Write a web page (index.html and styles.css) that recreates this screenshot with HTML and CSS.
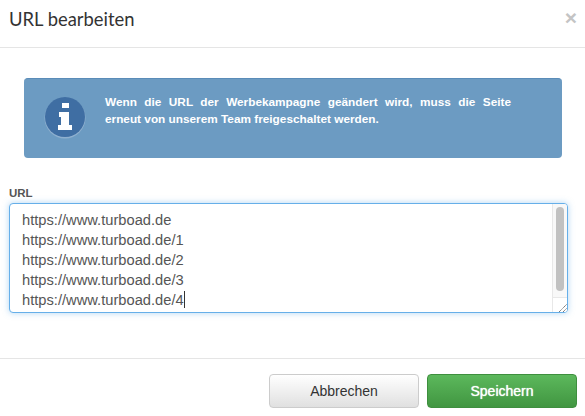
FILE: index.html
```html
<!DOCTYPE html>
<html lang="de">
<head>
<meta charset="utf-8">
<title>URL bearbeiten</title>
<link rel="stylesheet" href="styles.css">
</head>
<body>
<div class="modal">
  <header class="modal-header">
    <h4 class="modal-title">URL bearbeiten</h4>
    <span class="close">×</span>
  </header>
  <main class="modal-body">
    <div class="alert">
      <svg class="alert-icon" width="44" height="44" viewBox="0 0 44 44" aria-hidden="true">
        <circle cx="22" cy="23" r="20.5" fill="#8fb0cf"/>
        <circle cx="22" cy="22" r="20" fill="#3f6ea3"/>
        <path fill="#fff" d="M19 8h7v5h-7zM16 17h10v13h3v5H15v-5h3v-8h-2z"/>
      </svg>
      <p class="alert-text">Wenn die URL der Werbekampagne geändert wird, muss die Seite erneut von unserem Team freigeschaltet werden.</p>
    </div>
    <label class="field-label">URL</label>
    <div class="textarea">
      <div class="textarea-text">
        <div>https://www.turboad.de</div>
        <div>https://www.turboad.de/1</div>
        <div>https://www.turboad.de/2</div>
        <div>https://www.turboad.de/3</div>
        <div>https://www.turboad.de/4<span class="caret"></span></div>
      </div>
      <div class="scrollbar">
        <div class="track"><div class="thumb"></div></div>
        <div class="resizer">
          <svg width="15" height="15" viewBox="0 0 15 15" aria-hidden="true">
            <path d="M6 14 14 6M10 14 14 10" stroke="#666" stroke-width="1" fill="none" stroke-dasharray="1.2 .6"/>
          </svg>
        </div>
      </div>
    </div>
  </main>
  <footer class="modal-footer">
    <button class="btn btn-default">Abbrechen</button>
    <button class="btn btn-success">Speichern</button>
  </footer>
</div>
</body>
</html>
```
FILE: styles.css
```css
* { box-sizing: border-box; }
html, body { margin: 0; padding: 0; background: #fff; }
body { width: 585px; height: 416px; overflow: hidden; font-family: "Liberation Sans", Arial, sans-serif; color: #333; }
.modal { display: flex; flex-direction: column; height: 416px; }
.modal-header {
  height: 48px; border-bottom: 1px solid #e5e5e5; padding: 0 8px 0 9px;
  display: flex; justify-content: space-between; align-items: flex-start;
}
.modal-title { margin: 7px 0 0; font: 400 18.4px/24px "Lato", sans-serif; color: #333; }
.close { font: 700 21px/21px "Liberation Sans", sans-serif; color: #c4c4c4; margin: 7px 0 0 0; }
.modal-body { flex: 1; padding: 30px 17px 0 9px; }
.alert {
  margin: 0 6px 0 15px; height: 80px; background: #6c9bc2; border-top: 1px solid #5a8cb8;
  border-radius: 4px; display: flex; align-items: flex-start; padding: 16px 51px 0 19px; gap: 18px;
}
.alert-icon { flex: none; }
.alert-text {
  margin: -1px 0 0; flex: 1; font-size: 11.8px; line-height: 17px; font-weight: 700;
  color: #fff; text-align: justify;
}
.field-label { display: block; margin: 26px 0 1px; font-size: 11.5px; line-height: 18px; font-weight: 700; color: #555; }
.textarea {
  display: flex; height: 110px; border: 1px solid #66afe9; border-radius: 4px;
  box-shadow: 0 0 6px rgba(102,175,233,.5); background: #fff; overflow: hidden;
}
.textarea-text { flex: 1; padding: 6px 12px; font-size: 14.7px; line-height: 20px; color: #555; }
.caret { display: inline-block; width: 1px; height: 17px; background: #333; vertical-align: -3px; }
.scrollbar { width: 15px; display: flex; flex-direction: column; border-left: 1px solid #e8e8e8; background: #f8f8f8; }
.track { flex: 1; padding: 3px 3px 6px 3px; }
.thumb { height: 84px; width: 8px; background: #c1c1c1; border-radius: 4px; }
.resizer { height: 15px; border-top: 1px solid #e8e8e8; background: #fff; }
.resizer svg { display: block; }
.modal-footer {
  height: 58px; border-top: 1px solid #e5e5e5; padding: 15px 8px 0 0;
  display: flex; justify-content: flex-end; align-items: flex-start; gap: 8px;
}
.btn { width: 150px; height: 34px; border-radius: 4px; font: 400 14px/20px "Liberation Sans", sans-serif; padding: 0; }
.btn-default { background: linear-gradient(#fff, #e0e0e0); border: 1px solid #ccc; color: #333; }
.btn-success { background: linear-gradient(#5cb85c, #419641); border: 1px solid #3e8f3e; color: #fff; font-weight: 400; text-shadow: 0 0 1px #fff; }
```
